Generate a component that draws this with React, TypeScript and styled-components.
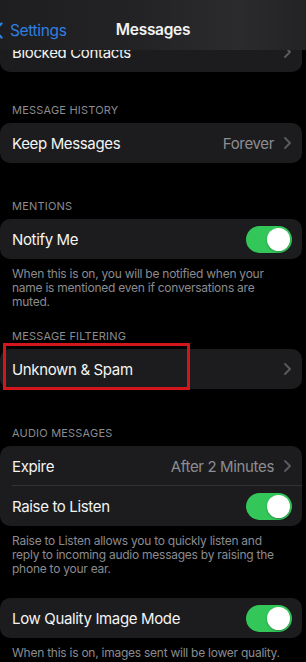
import React from 'react';
import styled, { createGlobalStyle } from 'styled-components';

const GlobalStyle = createGlobalStyle`
  html, body {
    margin: 0;
    padding: 0;
    background: #000;
  }
  body {
    font-family: Inter, "Noto Sans", "Liberation Sans", sans-serif;
    -webkit-font-smoothing: antialiased;
  }
`;

const Screen = styled.div`
  position: relative;
  width: 306px;
  height: 662px;
  overflow: hidden;
  background: #000;
`;

const NavBar = styled.div`
  position: absolute;
  top: 0;
  left: 0;
  right: 0;
  height: 50px;
  z-index: 2;
  display: flex;
  align-items: center;
  justify-content: center;
  padding-top: 8px;
  box-sizing: border-box;
  background: linear-gradient(90deg, #1e1e20 0%, #232325 45%, #2b2b2d 78%, #232325 100%);
`;

const BackButton = styled.div`
  position: absolute;
  left: -7px;
  top: 21px;
  display: flex;
  align-items: center;
  gap: 7px;
  color: #2f7fe0;
  font-size: 15.5px;
  letter-spacing: -0.35px;
`;

const NavTitle = styled.div`
  color: #f2f2f2;
  font-size: 15.5px;
  font-weight: 600;
  letter-spacing: -0.3px;
`;

const List = styled.div`
  display: flex;
  flex-direction: column;
  padding: 32px 4px 0 0;
`;

const Section = styled.div<{ $top?: number }>`
  margin-top: ${({ $top }) => $top ?? 0}px;
  display: flex;
  flex-direction: column;
`;

const SectionLabel = styled.div`
  height: 14px;
  line-height: 14px;
  margin: 0 0 6px 12px;
  color: #8b8b90;
  font-size: 11px;
  letter-spacing: 0.2px;
  text-transform: uppercase;
`;

const Card = styled.div`
  background: #1c1c1e;
  border-radius: 10px;
  display: flex;
  flex-direction: column;
`;

const Row = styled.div<{ $divider?: boolean }>`
  position: relative;
  height: 40px;
  display: flex;
  align-items: center;
  padding: 0 10px 0 12px;
  color: #f4f4f4;
  font-size: 15px;
  letter-spacing: -0.35px;

  ${({ $divider }) =>
    $divider &&
    `&::after {
      content: '';
      position: absolute;
      left: 12px;
      right: 0;
      bottom: 0;
      height: 1px;
      background: #323234;
    }`}
`;

const RowLabel = styled.span`
  flex: 1;
  white-space: nowrap;
`;

const RowValue = styled.span`
  color: #8d8d92;
  margin-right: 10px;
`;

const Footer = styled.div`
  margin: 8px 14px 0 12px;
  color: #8b8b90;
  font-size: 12px;
  line-height: 14px;
  letter-spacing: -0.25px;
`;

const Highlight = styled.div`
  position: absolute;
  left: 3px;
  top: -6px;
  width: 187px;
  height: 47px;
  box-sizing: border-box;
  border: 3px solid #d3161b;
  pointer-events: none;
`;

const Track = styled.div`
  width: 46px;
  height: 27px;
  border-radius: 14px;
  background: #33c659;
  display: flex;
  align-items: center;
  justify-content: flex-end;
  padding: 0 2px;
  box-sizing: border-box;
`;

const Knob = styled.div`
  width: 23px;
  height: 23px;
  border-radius: 50%;
  background: #fff;
  box-shadow: 0 1px 2px rgba(0, 0, 0, 0.25);
`;

const Chevron = ({ color = '#5c5c60' }: { color?: string }) => (
  <svg width="7" height="12" viewBox="0 0 7 12" style={{ flexShrink: 0, marginRight: 1 }}>
    <path d="M1 1l5 5-5 5" fill="none" stroke={color} strokeWidth="1.8" strokeLinecap="round" strokeLinejoin="round" />
  </svg>
);

const BackChevron = () => (
  <svg width="10" height="17" viewBox="0 0 10 17">
    <path d="M8.5 1.5L1.5 8.5l7 7" fill="none" stroke="#2f7fe0" strokeWidth="2.4" strokeLinecap="round" strokeLinejoin="round" />
  </svg>
);

const Toggle = () => (
  <Track>
    <Knob />
  </Track>
);

const App: React.FC = () => {
  return (
    <Screen>
      <GlobalStyle />
      <NavBar>
        <BackButton>
          <BackChevron />
          <span>Settings</span>
        </BackButton>
        <NavTitle>Messages</NavTitle>
      </NavBar>

      <List>
        <Section>
          <Card>
            <Row>
              <RowLabel>Blocked Contacts</RowLabel>
              <Chevron />
            </Row>
          </Card>
        </Section>

        <Section $top={31}>
          <SectionLabel>Message History</SectionLabel>
          <Card>
            <Row>
              <RowLabel>Keep Messages</RowLabel>
              <RowValue>Forever</RowValue>
              <Chevron />
            </Row>
          </Card>
        </Section>

        <Section $top={36}>
          <SectionLabel>Mentions</SectionLabel>
          <Card>
            <Row>
              <RowLabel>Notify Me</RowLabel>
              <Toggle />
            </Row>
          </Card>
          <Footer>
            When this is on, you will be notified when your name is mentioned even if conversations are muted.
          </Footer>
        </Section>

        <Section $top={20}>
          <SectionLabel>Message Filtering</SectionLabel>
          <Card>
            <Row>
              <RowLabel>Unknown &amp; Spam</RowLabel>
              <Chevron />
              <Highlight />
            </Row>
          </Card>
        </Section>

        <Section $top={37}>
          <SectionLabel>Audio Messages</SectionLabel>
          <Card>
            <Row $divider>
              <RowLabel>Expire</RowLabel>
              <RowValue>After 2 Minutes</RowValue>
              <Chevron />
            </Row>
            <Row>
              <RowLabel>Raise to Listen</RowLabel>
              <Toggle />
            </Row>
          </Card>
          <Footer>
            Raise to Listen allows you to quickly listen and reply to incoming audio messages by raising the phone to your ear.
          </Footer>
        </Section>

        <Section $top={22}>
          <Card>
            <Row>
              <RowLabel>Low Quality Image Mode</RowLabel>
              <Toggle />
            </Row>
          </Card>
          <Footer>When this is on, images sent will be lower quality.</Footer>
        </Section>
      </List>
    </Screen>
  );
};

export default App;
